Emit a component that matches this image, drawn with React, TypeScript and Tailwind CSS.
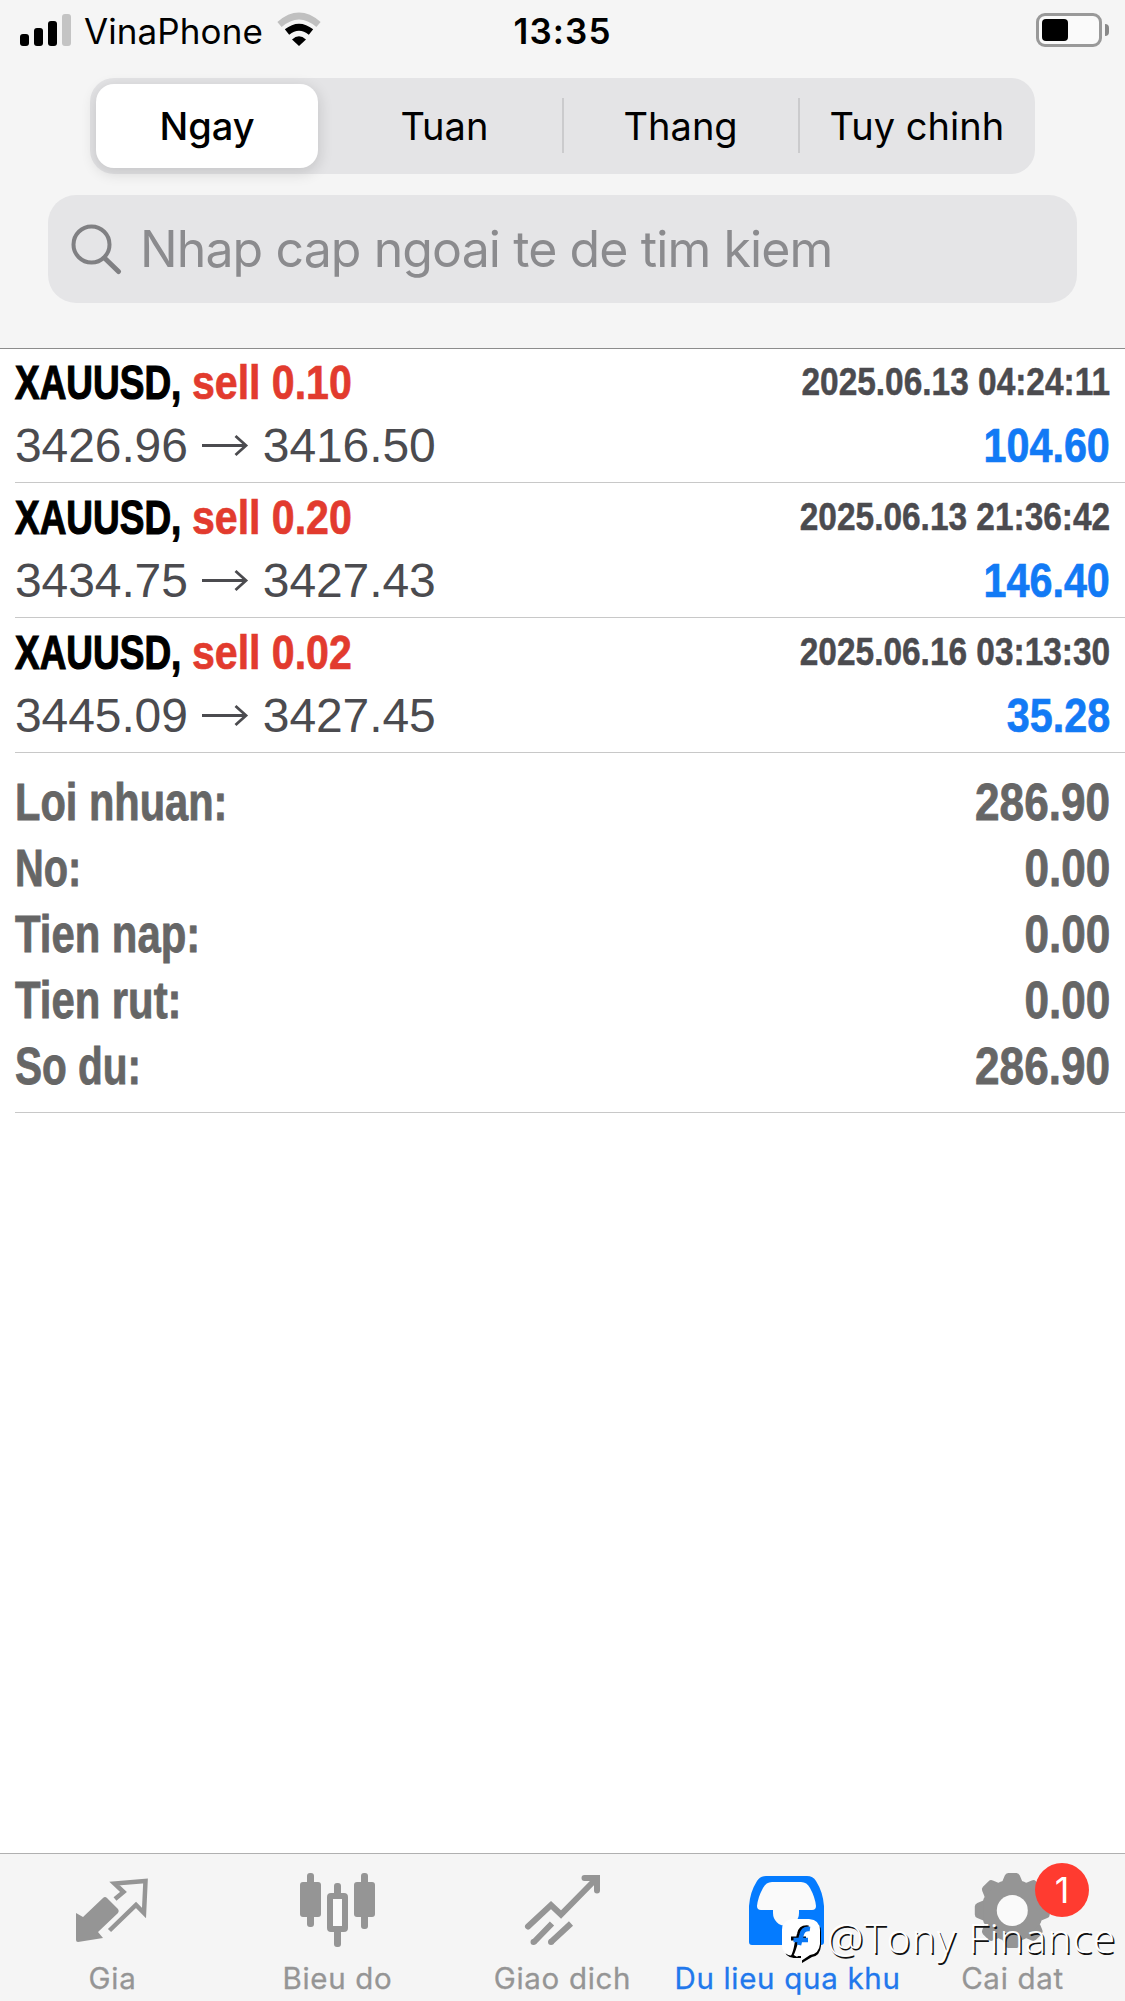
import React from 'react';
import clsx from 'clsx';

const periods = ['Ngay', 'Tuan', 'Thang', 'Tuy chinh'];

const deals = [
  { volume: '0.10', open: '3426.96', close: '3416.50', time: '2025.06.13 04:24:11', profit: '104.60' },
  { volume: '0.20', open: '3434.75', close: '3427.43', time: '2025.06.13 21:36:42', profit: '146.40' },
  { volume: '0.02', open: '3445.09', close: '3427.45', time: '2025.06.16 03:13:30', profit: '35.28' },
];

const summary = [
  { label: 'Loi nhuan:', value: '286.90', scale: 'scale-x-[0.815]' },
  { label: 'No:', value: '0.00', scale: 'scale-x-[0.78]' },
  { label: 'Tien nap:', value: '0.00', scale: 'scale-x-[0.82]' },
  { label: 'Tien rut:', value: '0.00', scale: 'scale-x-[0.82]' },
  { label: 'So du:', value: '286.90', scale: 'scale-x-[0.795]' },
];

function StatusBar() {
  return (
    <div className="grid h-[61px] grid-cols-3 items-start">
      <div className="flex">
        <svg className="h-[60px] w-[84px] shrink-0" viewBox="0 0 84 60">
          <rect x="20" y="34" width="9" height="12" rx="3" />
          <rect x="34" y="28" width="9" height="18" rx="3" />
          <rect x="48" y="21" width="9" height="25" rx="3" />
          <rect x="62" y="14" width="9" height="32" rx="3" fill="#c4c4c4" />
        </svg>
        <span className="mt-[10px] w-[189px] shrink-0 whitespace-nowrap text-[35px] leading-[42px] tracking-[0.1px]">VinaPhone</span>
        <svg className="h-[60px] w-[52px] shrink-0" viewBox="273 0 52 60" fill="none">
          <path d="M279.5 24.5Q299 7.500 318.500 24.500" stroke="#c0c0c0" strokeWidth="6.500" />
          <path d="M287 32Q299 22.500 311 32" stroke="#000" strokeWidth="7" />
          <path d="M292 39.500Q299 33 306 39.500L299 46Z" fill="#000" />
        </svg>
      </div>
      <span className="mt-[10px] text-center text-[35px] font-semibold leading-[42px] tracking-[1.1px]">13:35</span>
      <div className="mr-4 mt-[13px] flex items-center justify-end gap-[3px]">
        <div className="h-[34px] w-[66px] rounded-[9px] border-[3px] border-[#999] bg-[#fafafa] p-[3px]">
          <div className="h-[22px] w-[26px] rounded-[4px] bg-black" />
        </div>
        <div className="h-3 w-1 rounded-r-full bg-[#888]" />
      </div>
    </div>
  );
}

function Header() {
  return (
    <header className="h-[349px] shrink-0 border-b border-[#8c8c8c] bg-[#f5f5f5]">
      <StatusBar />
      <div className="ml-[90px] mt-[17px] flex h-[96px] w-[945px] items-center rounded-[24px] bg-[#e4e4e6] text-[38px]">
        {periods.map((label, i) => (
          <div
            key={label}
            className={clsx(
              'flex h-[84px] flex-1 items-center justify-center',
              i > 1 && 'relative before:absolute before:left-[-1px] before:top-[14px] before:h-[55px] before:w-[2px] before:bg-[#cbcbcd]'
            )}
          >
            {i === 0 ? (
              <div className="ml-[-3px] flex h-[84px] w-[222px] items-center justify-center rounded-[18px] bg-white font-medium shadow-[0_4px_14px_2px_rgba(0,0,0,0.12)]">
                <span className="pl-px pt-px">{label}</span>
              </div>
            ) : (
              <span className="whitespace-nowrap pt-px">{label}</span>
            )}
          </div>
        ))}
      </div>
      <div className="ml-[48px] mt-[21px] flex h-[108px] w-[1029px] items-center rounded-[28px] bg-[#e5e5e7] text-[#8b8b8e]">
        <svg className="ml-[20px] h-[52px] w-[56px] shrink-0" viewBox="68 223 56 52" fill="none" stroke="#808083" strokeWidth="4" strokeLinecap="round">
          <circle cx="91.500" cy="244.500" r="18" />
          <path d="M104.500 258L118.500 271.500" strokeWidth="5" />
        </svg>
        <span className="ml-[16px] whitespace-nowrap text-[50px] leading-none tracking-[-0.9px]">Nhap cap ngoai te de tim kiem</span>
      </div>
    </header>
  );
}

function DealRow({ deal }: { deal: (typeof deals)[number] }) {
  return (
    <div className="ml-[15px] flex h-[135px] justify-between border-b border-[#c8c8c8] pr-[15px] font-['Liberation_Sans']">
      <div>
        <div className="flex h-[65px] items-center pt-[4px] text-[48px] font-bold leading-none">
          <span className="w-[177px] origin-left scale-x-[0.77] whitespace-nowrap [-webkit-text-stroke:1.200px]">XAUUSD,</span>
          <span className="origin-left scale-x-[0.855] whitespace-nowrap text-[#e23b2e] [-webkit-text-stroke:0.700px]">sell {deal.volume}</span>
        </div>
        <div className="flex h-[65px] items-center text-[48px] leading-none tracking-[-0.1px] text-[#4b4b4f]">
          <span>{deal.open}</span>
          <svg className="ml-[13px] mr-[14px] h-[24px] w-[48px]" viewBox="0 0 48 24" fill="none" stroke="currentColor" strokeWidth="2.800">
            <path d="M1 11.500H45M34.500 2L45 11.500L34.500 21" />
          </svg>
          <span>{deal.close}</span>
        </div>
      </div>
      <div className="text-right font-bold leading-none">
        <div className="flex h-[65px] items-center justify-end pt-[2px] text-[39px] text-[#4b4b4f]">
          <span className="origin-right scale-x-[0.857] whitespace-nowrap [-webkit-text-stroke:0.500px]">{deal.time}</span>
        </div>
        <div className="flex h-[65px] items-center justify-end text-[48px] text-[#127af5]">
          <span className="origin-right scale-x-[0.86] [-webkit-text-stroke:0.700px]">{deal.profit}</span>
        </div>
      </div>
    </div>
  );
}

function Summary() {
  return (
    <div className="ml-[15px] h-[360px] border-b border-[#c8c8c8] pr-[15px] pt-[16px] font-['Liberation_Sans'] text-[51px] font-bold leading-none text-[#666]">
      {summary.map((s) => (
        <div key={s.label} className="flex h-[66px] items-center justify-between [-webkit-text-stroke:0.800px]">
          <span className={clsx('origin-left whitespace-nowrap', s.scale)}>{s.label}</span>
          <span className="origin-right scale-x-[0.865]">{s.value}</span>
        </div>
      ))}
    </div>
  );
}

const tooth = 'M-10 -29L-7.500 -35Q-6.500 -37.500 -4 -37.500H4Q6.500 -37.500 7.500 -35L10 -29Z';

const tabs = [
  {
    label: 'Gia',
    viewBox: '0 1854 225 100',
    icon: (
      <>
        <path d="M76 1913L83 1917L103 1898Q105 1896 107 1898L118 1909Q119.500 1911 118 1913L98 1932L103 1938L78 1942Q76 1942 76 1940Z" fill="currentColor" />
        <path d="M115 1899L123.500 1892L114.500 1883.500L145.500 1881L144 1913L136 1905L109.500 1930.500" fill="none" stroke="currentColor" strokeWidth="4.500" />
      </>
    ),
  },
  {
    label: 'Bieu do',
    viewBox: '225 1854 225 100',
    icon: (
      <g fill="currentColor">
        <rect x="300" y="1882" width="21" height="35" rx="3" />
        <rect x="307" y="1873" width="7" height="54" rx="3" />
        <rect x="334" y="1883" width="7" height="15" rx="3" />
        <rect x="334" y="1928" width="7" height="19" rx="3" />
        <rect x="330" y="1896" width="15" height="33" rx="1" fill="#fafafa" stroke="currentColor" strokeWidth="6" />
        <rect x="354" y="1882" width="21" height="35" rx="3" />
        <rect x="361" y="1873" width="7" height="56" rx="3" />
      </g>
    ),
  },
  {
    label: 'Giao dich',
    viewBox: '450 1854 225 100',
    icon: (
      <g fill="none" stroke="currentColor" strokeWidth="6">
        <path d="M528 1926.500L551 1905L561 1914.500L594 1881" strokeLinecap="round" />
        <path d="M584.500 1878H597V1890.500" strokeLinecap="round" />
        <path d="M588 1878H597V1887Z" fill="currentColor" strokeWidth="1" />
        <path d="M534 1942L552 1923.500M551 1942L571 1923.500" />
        <path d="M533.500 1942h.1M551 1942h.1" strokeLinecap="round" />
      </g>
    ),
  },
  {
    label: 'Du lieu qua khu',
    viewBox: '675 1854 225 100',
    icon: (
      <>
        <path d="M749 1942V1906Q750 1892 757 1881Q760 1876 766 1876H807Q813 1876 816 1881Q823 1892 824 1906V1942Q824 1945 821 1945H752Q749 1945 749 1942Z" fill="#047bff" />
        <path d="M757 1906Q758 1897 763 1888Q766 1882 772 1882H801Q807 1882 810 1888Q815 1897 816 1906Q816 1910 812 1910H799V1913A13 13 0 0 1 773 1913V1910H761Q757 1910 757 1906Z" fill="#fafafa" />
      </>
    ),
  },
  {
    label: 'Cai dat',
    viewBox: '900 1854 225 100',
    icon: (
      <g transform="translate(1012.3 1910.500)" fill="currentColor">
        <circle r="31" />
        {[0, 45, 90, 135, 180, 225, 270, 315].map((a) => (
          <path key={a} d={tooth} transform={`rotate(${a})`} />
        ))}
        <circle r="15.500" fill="#fafafa" />
      </g>
    ),
  },
];

function Watermark() {
  return (
    <div className="absolute left-[780px] top-[62px] flex h-[50px] items-center">
      <svg className="h-[50px] w-[44px] shrink-0" viewBox="780 1916 44 50">
        <path d="M794 1921H811Q821 1922 821 1932V1946Q820 1956 812 1957L802 1963V1958H794Q784 1957 784 1947V1931Q784 1922 794 1921Z" fill="#000" />
        <path d="M793 1919H809Q820 1920 820 1930V1944Q819 1954 810 1955L801 1961V1956H793Q782 1955 782 1945V1930Q782 1920 793 1919Z" fill="#fff" />
        <path d="M808.500 1927.500Q800.500 1926.500 799 1934L796.500 1944Q795 1953 792.500 1957M791 1938.500H806" fill="none" stroke="#000" strokeWidth="4" />
        <path d="M800 1943Q797.500 1952 795.500 1956" fill="none" stroke="#fff" strokeWidth="4" />
        <path d="M810 1929Q803 1928 801.500 1935L799 1945M793.500 1940H808" fill="none" stroke="#0a78f5" strokeWidth="4.500" />
      </svg>
      <span className="ml-[3px] whitespace-nowrap pb-[7px] font-['Open_Sans'] text-[41px] font-light leading-none tracking-[0.9px] text-white [text-shadow:1.500px_1.500px_0_#111]">@Tony Finance</span>
    </div>
  );
}

function TabBar() {
  return (
    <nav className="relative grid h-[148px] shrink-0 grid-cols-5 border-t border-[#b0b0b0] bg-[#f5f5f5] text-[#959595]">
      {tabs.map((t, i) => (
        <div key={t.label} className="relative flex flex-col items-center">
          <svg className="h-[100px] w-[225px] shrink-0" viewBox={t.viewBox}>
            {t.icon}
          </svg>
          <span className={clsx('mt-[6px] whitespace-nowrap text-[29.5px] leading-[36px] tracking-[0.7px] [-webkit-text-stroke:0.300px]', i === 3 && 'text-[#2178ec]')}>
            {t.label}
          </span>
          {i === 4 && (
            <span className="absolute left-[135px] top-[9px] flex h-[54px] w-[54px] items-center justify-center rounded-full bg-[#ff3b30] text-[36px] leading-none text-white">
              1
            </span>
          )}
        </div>
      ))}
      <Watermark />
    </nav>
  );
}

export default function App() {
  return (
    <div className="flex h-[2001px] w-[1125px] flex-col overflow-hidden bg-white font-['Inter',sans-serif] text-black">
      <Header />
      <main className="-mt-px flex-1">
        {deals.map((d) => (
          <DealRow key={d.time} deal={d} />
        ))}
        <Summary />
      </main>
      <TabBar />
    </div>
  );
}
